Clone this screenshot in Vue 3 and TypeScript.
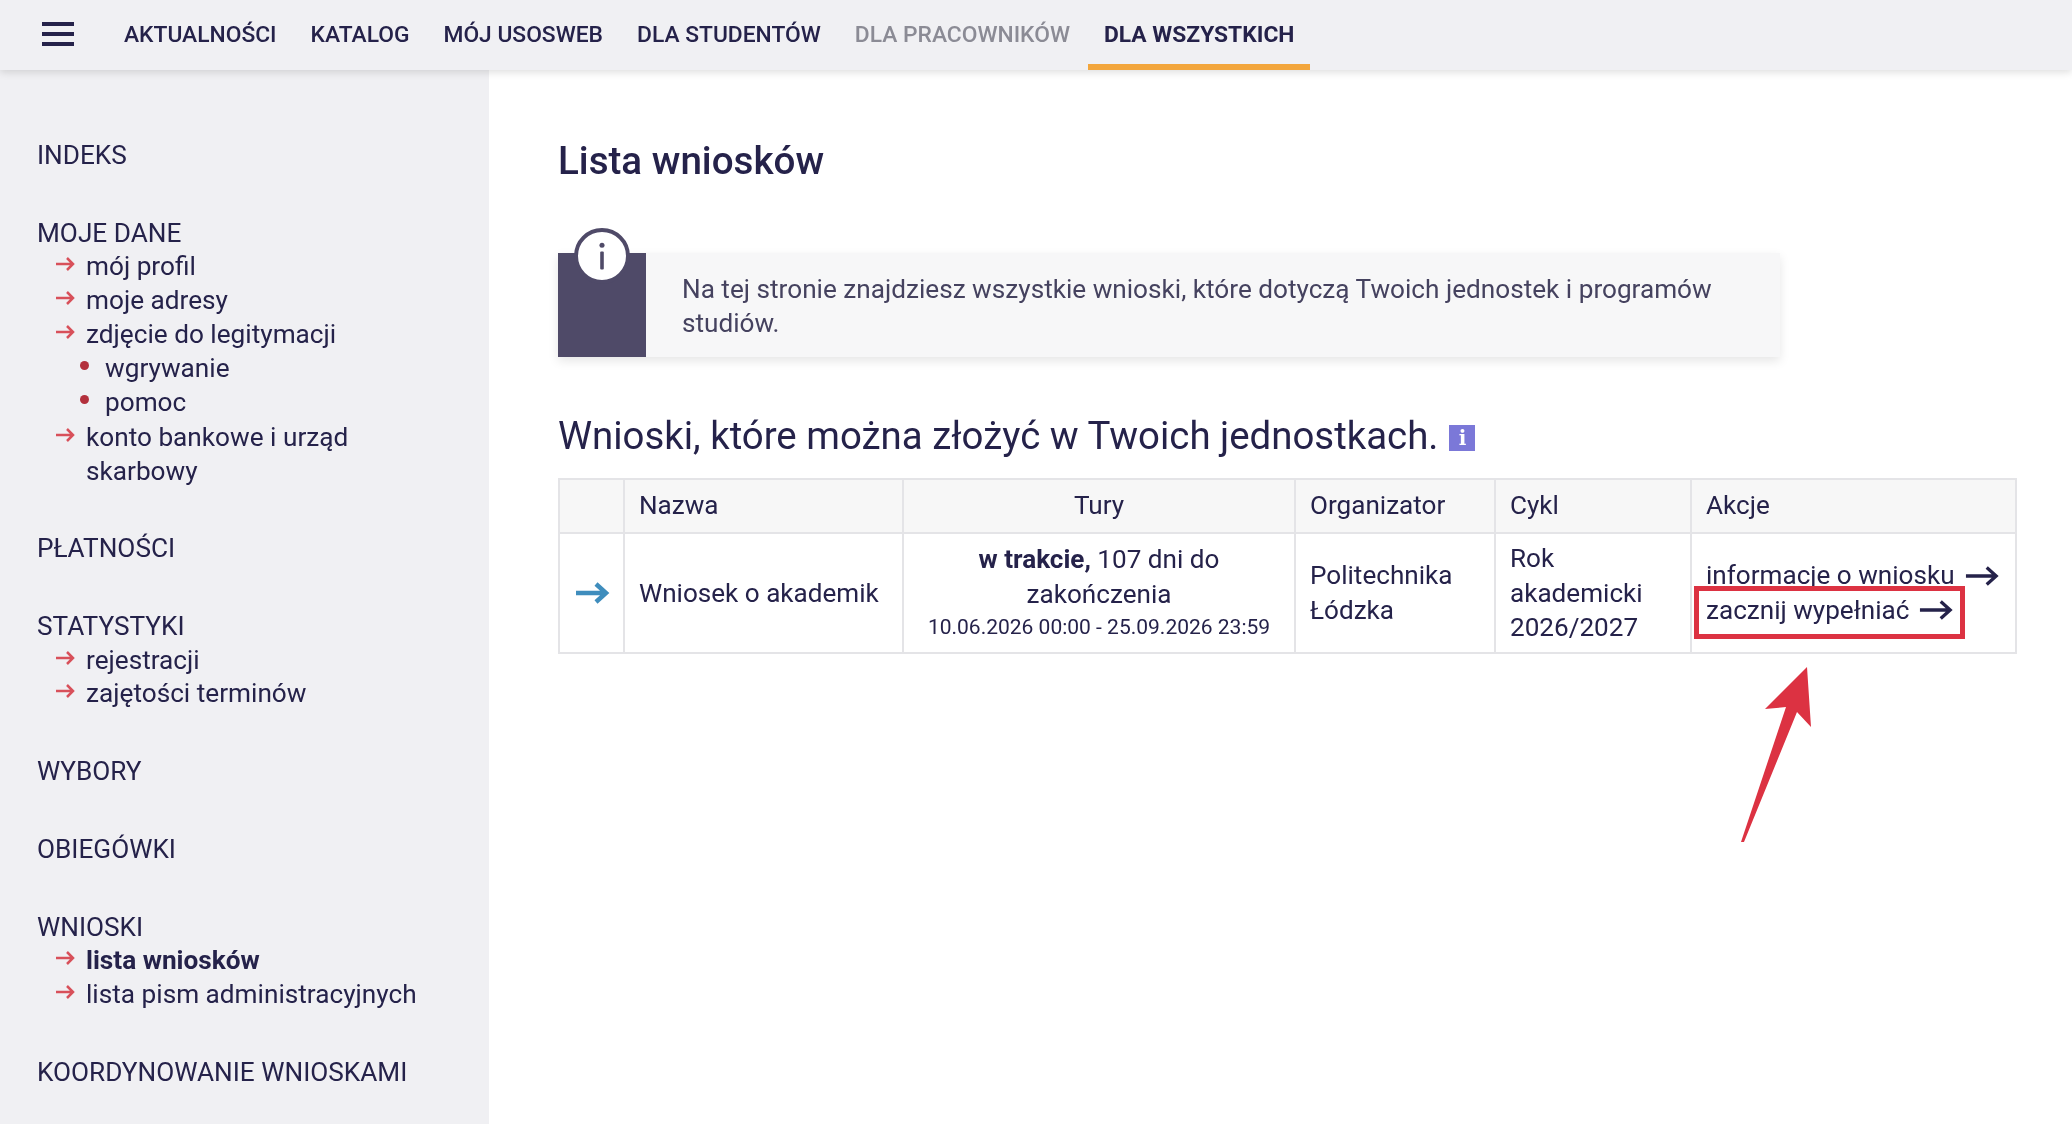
<template>
  <div class="page">
    <header class="topbar">
      <button class="burger" type="button" aria-label="menu"><span></span><span></span><span></span></button>
      <nav class="nav">
        <a
          v-for="item in navItems"
          :key="item.label"
          :class="['nav-item', { muted: item.muted, active: item.active }]"
        >{{ item.label }}</a>
      </nav>
    </header>

    <div class="body">
      <aside class="sidebar">
        <section v-for="group in menu" :key="group.title" class="group">
          <div class="group-title">{{ group.title }}</div>
          <ul v-if="group.items" class="items">
            <li v-for="item in group.items" :key="item.label" :class="['item', item.level === 2 ? 'sub' : '', { current: item.current }]">
              <span v-if="item.level === 2" class="dot"></span>
              <svg v-else class="red-arrow" viewBox="0 0 20 16" width="20" height="16">
                <path d="M1 8h17M12 2l6 6-6 6" fill="none" stroke="#d8505a" stroke-width="2.5" />
              </svg>
              <span>{{ item.label }}</span>
            </li>
          </ul>
        </section>
      </aside>

      <main class="content">
        <h1>Lista wniosków</h1>

        <div class="notice">
          <div class="notice-side">
            <span class="notice-icon">
              <svg viewBox="0 0 40 40" width="36" height="36">
                <circle cx="20" cy="8" r="2.8" fill="#4f4a68" />
                <rect x="18" y="15" width="4" height="20" rx="1" fill="#4f4a68" />
              </svg>
            </span>
          </div>
          <p>Na tej stronie znajdziesz wszystkie wnioski, które dotyczą Twoich jednostek i programów studiów.</p>
        </div>

        <h2>
          Wnioski, które można złożyć w Twoich jednostkach.
          <span class="info-badge">i</span>
        </h2>

        <table class="grid">
          <colgroup>
            <col style="width: 65px" />
            <col style="width: 279px" />
            <col style="width: 392px" />
            <col style="width: 200px" />
            <col style="width: 196px" />
            <col style="width: 325px" />
          </colgroup>
          <thead>
            <tr>
              <th></th>
              <th>Nazwa</th>
              <th class="center">Tury</th>
              <th>Organizator</th>
              <th>Cykl</th>
              <th>Akcje</th>
            </tr>
          </thead>
          <tbody>
            <tr>
              <td class="center">
                <svg class="blue-arrow" viewBox="0 0 36 24" width="36" height="24">
                  <path d="M2 12h30M22 3l10 9-10 9" fill="none" stroke="#3f8dbd" stroke-width="4.5" />
                </svg>
              </td>
              <td>Wniosek o akademik</td>
              <td class="center">
                <div><b>w trakcie,</b> 107 dni do</div>
                <div>zakończenia</div>
                <div class="dates">10.06.2026 00:00 - 25.09.2026 23:59</div>
              </td>
              <td>Politechnika Łódzka</td>
              <td>Rok akademicki 2026/2027</td>
              <td class="actions">
                <a v-for="action in actions" :key="action" class="action">
                  {{ action }}
                  <svg viewBox="0 0 36 24" width="34" height="24">
                    <path d="M1 12h32M23 3l10 9-10 9" fill="none" stroke="#25224a" stroke-width="3.5" />
                  </svg>
                </a>
              </td>
            </tr>
          </tbody>
        </table>
      </main>
    </div>

    <!-- adnotacja na zrzucie -->
    <div class="highlight"></div>
    <svg class="pointer" viewBox="0 0 80 180" width="80" height="180">
      <polygon points="67,2 25,44 46,42 1,177 4,177 57,47 71,62" fill="#dc3242" />
    </svg>
  </div>
</template>

<script setup lang="ts">
interface NavItem {
  label: string
  muted?: boolean
  active?: boolean
}

interface MenuItem {
  label: string
  level?: number
  current?: boolean
}

interface MenuGroup {
  title: string
  items?: MenuItem[]
}

const navItems: NavItem[] = [
  { label: 'AKTUALNOŚCI' },
  { label: 'KATALOG' },
  { label: 'MÓJ USOSWEB' },
  { label: 'DLA STUDENTÓW' },
  { label: 'DLA PRACOWNIKÓW', muted: true },
  { label: 'DLA WSZYSTKICH', active: true }
]

const menu: MenuGroup[] = [
  { title: 'INDEKS' },
  {
    title: 'MOJE DANE',
    items: [
      { label: 'mój profil' },
      { label: 'moje adresy' },
      { label: 'zdjęcie do legitymacji' },
      { label: 'wgrywanie', level: 2 },
      { label: 'pomoc', level: 2 },
      { label: 'konto bankowe i urząd skarbowy' }
    ]
  },
  { title: 'PŁATNOŚCI' },
  {
    title: 'STATYSTYKI',
    items: [{ label: 'rejestracji' }, { label: 'zajętości terminów' }]
  },
  { title: 'WYBORY' },
  { title: 'OBIEGÓWKI' },
  {
    title: 'WNIOSKI',
    items: [{ label: 'lista wniosków', current: true }, { label: 'lista pism administracyjnych' }]
  },
  { title: 'KOORDYNOWANIE WNIOSKAMI' }
]

const actions = ['informacje o wniosku', 'zacznij wypełniać']
</script>

<style>
html,
body {
  margin: 0;
  background: #fff;
  overflow: hidden;
}
</style>

<style scoped>
.page {
  position: relative;
  width: 2072px;
  height: 1124px;
  overflow: hidden;
  font-family: Roboto, "Noto Sans", sans-serif;
  color: #25224a;
  background: #fff;
  filter: blur(0.5px);
}

.topbar {
  position: relative;
  z-index: 2;
  display: flex;
  align-items: center;
  height: 70px;
  padding-left: 42px;
  background: #f0f0f3;
  box-shadow: 0 2px 8px rgba(0, 0, 0, 0.14);
}

.burger {
  display: flex;
  flex-direction: column;
  gap: 6px;
  width: 32px;
  margin-bottom: 2px;
  padding: 0;
  border: none;
  background: none;
}

.burger span {
  height: 4px;
  background: #25224a;
}

.nav {
  display: flex;
  align-self: stretch;
  margin-left: 34px;
}

.nav-item {
  display: flex;
  align-items: center;
  height: 70px;
  box-sizing: border-box;
  padding: 0 16px 2px;
  margin-right: 2px;
  font-size: 22.8px;
  font-weight: 500;
  white-space: nowrap;
}

.nav-item.muted {
  color: #8b8b95;
}

.nav-item.active {
  font-weight: 700;
  border-bottom: 6px solid #f3a63c;
  padding-top: 6px;
}

.body {
  display: flex;
  height: 1054px;
}

.sidebar {
  flex: 0 0 489px;
  box-sizing: border-box;
  padding: 69px 60px 0 37px;
  background: #f0f0f3;
  font-size: 26.2px;
  line-height: 33.7px;
}

.group {
  margin-bottom: 44px;
}

.items {
  margin: 0;
  padding: 0;
  list-style: none;
}

.item {
  position: relative;
  padding-left: 49px;
}

.item.sub {
  margin-bottom: 1px;
  padding-left: 68px;
}

.item.current {
  font-weight: 700;
}

.red-arrow {
  position: absolute;
  left: 18px;
  top: 6px;
}

.dot {
  position: absolute;
  left: 43px;
  top: 9px;
  width: 9px;
  height: 9px;
  border-radius: 50%;
  background: #b3303c;
}

.content {
  flex: 1;
  padding: 0 56px 0 69px;
}

h1 {
  margin: 68px 0 0;
  font-size: 38.6px;
  line-height: 46px;
  font-weight: 500;
}

.notice {
  display: flex;
  width: 1222px;
  height: 104px;
  margin-top: 69px;
  background: #f7f7f8;
  box-shadow: 0 4px 10px rgba(0, 0, 0, 0.1);
}

.notice-side {
  position: relative;
  flex: 0 0 88px;
  background: #4f4a68;
}

.notice-icon {
  position: absolute;
  left: 16px;
  top: -25px;
  display: flex;
  align-items: center;
  justify-content: center;
  width: 56px;
  height: 56px;
  box-sizing: border-box;
  border: 4px solid #4f4a68;
  border-radius: 50%;
  background: #fff;
}

.notice p {
  margin: 0;
  padding: 20px 50px 0 36px;
  font-size: 26.17px;
  line-height: 33.5px;
  color: #45425f;
}

h2 {
  display: flex;
  align-items: center;
  gap: 11px;
  margin: 56px 0 0;
  font-size: 38.4px;
  line-height: 46px;
  font-weight: 400;
}

.info-badge {
  display: inline-flex;
  align-items: center;
  justify-content: center;
  width: 26px;
  height: 26px;
  margin-top: 4px;
  background: #7b78d8;
  color: #fff;
  font-family: "DejaVu Serif", serif;
  font-size: 20px;
  font-weight: 700;
}

.grid {
  width: 1457px;
  margin-top: 19px;
  table-layout: fixed;
  border-collapse: collapse;
  font-size: 26.1px;
  line-height: 34.6px;
}

.grid th,
.grid td {
  padding: 0 14px;
  border: 2px solid #e4e4e7;
  text-align: left;
}

.grid th {
  height: 50px;
  padding-bottom: 2px;
  font-weight: 400;
  background: #f7f7f7;
}

.grid td {
  height: 118px;
}

.grid .center {
  text-align: center;
}

.blue-arrow {
  display: block;
  margin: 0 auto;
}

.dates {
  font-size: 21px;
  line-height: 33px;
}

.action {
  display: flex;
  align-items: center;
  gap: 10px;
  white-space: nowrap;
}

.highlight {
  position: absolute;
  left: 1694px;
  top: 586px;
  width: 271px;
  height: 53px;
  box-sizing: border-box;
  border: 5px solid #dc3242;
}

.pointer {
  position: absolute;
  left: 1740px;
  top: 665px;
}
</style>
